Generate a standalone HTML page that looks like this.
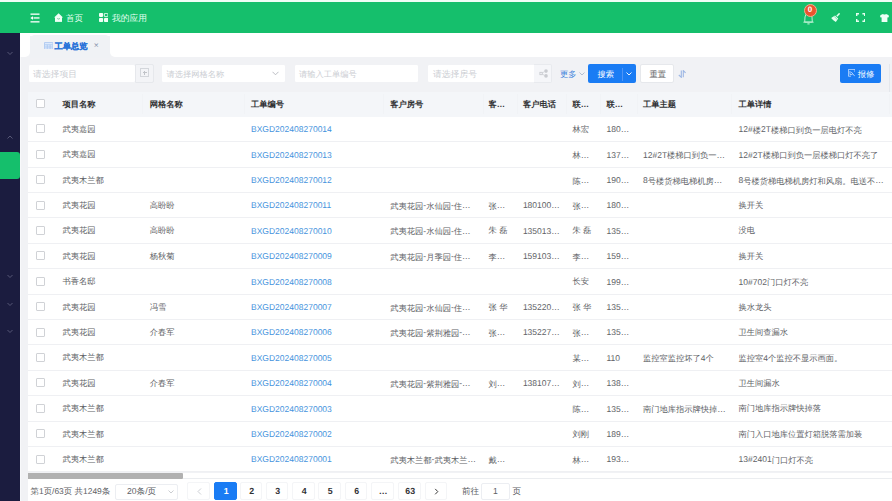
<!DOCTYPE html>
<html><head><meta charset="utf-8"><style>
*{margin:0;padding:0;box-sizing:border-box}
html,body{text-rendering:geometricPrecision;width:892px;height:501px;overflow:hidden;background:#fff;font-family:"Liberation Sans",sans-serif;position:relative}
.abs{position:absolute}
#topstrip{position:absolute;left:0;top:0;width:892px;height:2px;background:#effdf6}
#hdr{position:absolute;left:0;top:2px;width:892px;height:31px;background:#15bf6c;color:#fff}
#side{position:absolute;left:0;top:33px;width:20px;height:468px;background:#1b1c3f}
.chev{position:absolute;left:7px;width:6px;height:6px;border-right:1px solid #5d5f7e;border-bottom:1px solid #5d5f7e;transform:rotate(45deg)}
.chev.up{transform:rotate(-135deg)}
#sideact{position:absolute;left:0;top:151.5px;width:19.5px;height:27px;background:#15bf6c;border-radius:0 3px 3px 0}
#tabbar{position:absolute;left:20px;top:33px;width:872px;height:24px;background:#fff}
#tab{position:absolute;left:30px;top:35px;width:80px;height:23px;background:#f0f2f5;border-radius:5px 5px 0 0}
#content{position:absolute;left:20px;top:36px;width:872px;height:465px;background:#f1f2f5}
.inp{position:absolute;top:64px;height:19px;background:#fff;border:1px solid #f1f2f5;border-radius:2px;font-size:8.8px;color:#cbced3;line-height:17px;padding-top:1px;padding-left:4px;white-space:nowrap;overflow:hidden}
.app{position:absolute;top:64px;height:19px;background:#f5f7fa;border:1px solid #e8eaee;border-radius:0 2px 2px 0}
#table{position:absolute;left:28px;top:92px;width:864px;height:380px;background:#fff}
#thead{position:absolute;left:28px;top:92px;width:864px;height:24.8px;background:#f4f6f9}
.th{position:absolute;top:92.8px;height:24.5px;line-height:24.5px;font-size:8.25px;font-weight:bold;color:#303133;white-space:nowrap}
.thd{position:absolute;top:94px;width:1px;height:20px;background:#f1f3f6}
.td{position:absolute;height:25.4px;line-height:26.2px;font-size:8.25px;color:#606266;white-space:nowrap}
.td.link{color:#4593dd}
.lt{font-size:8.5px;letter-spacing:0;position:relative;top:-0.6px}

.rb{position:absolute;left:28px;width:864px;height:1px;background:#eff0f3}
.cb{position:absolute;width:9px;height:9.2px;border:1px solid #d0d2d6;border-radius:1px;background:#fff}
.pg{position:absolute;top:482px;width:22.5px;height:17.5px;line-height:17px;padding-top:0.2px;padding-left:2px;text-align:center;font-size:8.8px;font-weight:bold;color:#303133;background:#fff;border:1px solid #f4f5f7;border-radius:2px}
.pg.act{background:#1a7cf4;color:#fff;border-color:#1a7cf4}

</style></head><body>
<div id="topstrip"></div>
<div id="hdr">
  <svg class="abs" style="left:30px;top:10.5px" width="10" height="10" viewBox="0 0 10 10"><rect x="0.5" y="0.5" width="9" height="1.3" fill="#fff"/><rect x="3.5" y="4.3" width="6" height="1.3" fill="#fff"/><path d="M0.3 5 L3 3.2 L3 6.8 Z" fill="#fff"/><rect x="0.5" y="8.2" width="9" height="1.3" fill="#fff"/></svg>
  <svg class="abs" style="left:54px;top:11px" width="9.2" height="9" viewBox="0 0 9.2 9"><path d="M4.6 0.2 L9.1 4.6 L0.1 4.6 Z" fill="#effff6"/><rect x="1" y="4" width="7" height="4.9" fill="#effff6"/><path d="M3.3 5.5 Q4.6 6.6 5.9 5.5" stroke="#4aa878" stroke-width="0.7" fill="none"/></svg>
  <div class="abs" style="left:66px;top:9.7px;font-size:8.5px;line-height:12px;color:#e6fff2">首页</div>
  <svg class="abs" style="left:98.8px;top:11px" width="9.5" height="9" viewBox="0 0 9.5 9"><rect x="0" y="0" width="4.1" height="3.9" rx="0.8" fill="#f0fff6"/><rect x="5.35" y="0.35" width="3.6" height="3.3" rx="0.6" fill="none" stroke="#f0fff6" stroke-width="0.9"/><rect x="0" y="5" width="4.1" height="4" rx="0.8" fill="#f0fff6"/><rect x="5" y="5" width="4.3" height="4" rx="0.8" fill="#f0fff6"/></svg>
  <div class="abs" style="left:112px;top:9.7px;font-size:8.75px;line-height:12px;color:#e6fff2">我的应用</div>
  <!-- bell -->
  <svg class="abs" style="left:802px;top:8.5px" width="13" height="14" viewBox="0 0 13 14"><path d="M2.7 11 L3 6 Q3 2.5 6.5 2.5 Q10 2.5 10 6 L10.3 11 Z M1.4 11.2 L11.6 11.2" stroke="#c9f5dc" stroke-width="0.9" fill="none"/><path d="M5.4 12.9 L7.6 12.9" stroke="#c9f5dc" stroke-width="1"/></svg>
  <div class="abs" style="left:803.5px;top:2px;width:13px;height:13px;border-radius:50%;background:#e9542f;border:1.2px solid #f0b08f;color:#fff;font-size:8px;font-weight:bold;line-height:10.6px;text-align:center">0</div>
  <!-- broom -->
  <svg class="abs" style="left:830.8px;top:11px" width="9" height="9" viewBox="0 0 9 9"><path d="M8.6 0.4 L5.8 3.2" stroke="#e6fff1" stroke-width="1.5"/><path d="M4 2.4 L7.2 5.4 L4.8 8.9 Q2 7.6 0.2 5 Z" fill="#e6fff1"/><path d="M3.3 3.6 L6.1 6.3" stroke="#15bf6c" stroke-width="0.5"/></svg>
  <!-- fullscreen -->
  <svg class="abs" style="left:856px;top:11px" width="9.4" height="9" viewBox="0 0 9.4 9"><path d="M0.7 3 L0.7 0.7 L3 0.7 M6.4 0.7 L8.7 0.7 L8.7 3 M8.7 6 L8.7 8.3 L6.4 8.3 M3 8.3 L0.7 8.3 L0.7 6" stroke="#e6fff1" stroke-width="1.4" fill="none"/></svg>
  <!-- shirt -->
  <svg class="abs" style="left:880.4px;top:11.8px" width="9" height="8.2" viewBox="0 0 9 8.2"><path d="M3 0 Q4.5 1.1 6 0 L8.3 1 Q9 1.6 8.8 3.2 L7.4 3.5 L7.4 8.2 L1.6 8.2 L1.6 3.5 L0.2 3.2 Q0 1.6 0.7 1 Z" fill="#eefff6"/></svg>
</div>
<div id="side">
<svg class="abs" style="left:7px;top:17.9px" width="6" height="5" viewBox="0 0 6 5"><path d="M0.5 1 L3 3.5 L5.5 1" stroke="#5d5f7d" stroke-width="0.9" fill="none"/></svg><svg class="abs" style="left:7px;top:101.9px" width="6" height="5" viewBox="0 0 6 5"><path d="M0.5 3.5 L3 1 L5.5 3.5" stroke="#5d5f7d" stroke-width="0.9" fill="none"/></svg><div id="sideact" style="top:118.5px"></div><svg class="abs" style="left:7px;top:240.7px" width="6" height="5" viewBox="0 0 6 5"><path d="M0.5 1 L3 3.5 L5.5 1" stroke="#5d5f7d" stroke-width="0.9" fill="none"/></svg><svg class="abs" style="left:7px;top:268.5px" width="6" height="5" viewBox="0 0 6 5"><path d="M0.5 1 L3 3.5 L5.5 1" stroke="#5d5f7d" stroke-width="0.9" fill="none"/></svg><svg class="abs" style="left:7px;top:296.3px" width="6" height="5" viewBox="0 0 6 5"><path d="M0.5 1 L3 3.5 L5.5 1" stroke="#5d5f7d" stroke-width="0.9" fill="none"/></svg>
</div>
<div id="content"></div>
<div class="abs" style="left:20px;top:33px;width:872px;height:3px;background:#fff"></div>
<div class="abs" style="left:20px;top:33px;width:10px;height:24px;background:#fff;border-radius:0 0 5px 0"></div>
<div class="abs" style="left:110px;top:33px;width:782px;height:24px;background:#fff;border-radius:0 0 0 5px"></div>
<div class="abs" style="left:20px;top:57px;width:1.3px;height:444px;background:#f8f9fb"></div>
<div id="tab">
  <svg class="abs" style="left:13.5px;top:6.8px" width="9.4" height="7.7" viewBox="0 0 9.4 7.7"><rect x="0.4" y="0.4" width="8.6" height="6.9" rx="0.6" fill="#dce9fb" stroke="#a3c3f0" stroke-width="0.8"/><path d="M0.8 2.8 L8.6 2.8 M0.8 5 L8.6 5 M3.3 2.8 L3.3 7.3 M6.1 2.8 L6.1 7.3" stroke="#a3c3f0" stroke-width="0.7"/></svg>
  <div class="abs" style="left:24.5px;top:5.8px;font-size:8.25px;line-height:12px;font-weight:bold;color:#2a74d9;-webkit-text-stroke:0.2px #2a74d9">工单总览</div>
  <div class="abs" style="left:63.8px;top:4px;font-size:8.5px;line-height:12px;color:#7f8ea8">×</div>
</div>
<!-- filters -->
<div class="inp" style="left:28px;width:107px;border-right:none">请选择项目</div>
<div class="app" style="left:134.5px;width:19.5px;top:63.7px;height:19.8px;background:#f3f4f7;border-color:#e6e8ec"><div class="abs" style="left:4.8px;top:3.5px;width:8.7px;height:8.7px;border:1px solid #d3d6db;"></div><div class="abs" style="left:7.2px;top:7.4px;width:4px;height:0.9px;background:#c0c3c8"></div><div class="abs" style="left:8.75px;top:5.9px;width:0.9px;height:4px;background:#c0c3c8"></div></div>
<div class="inp" style="left:160.5px;width:125.5px;padding-left:5px;font-size:8.25px">请选择网格名称</div>
<svg class="abs" style="left:272px;top:71px" width="7" height="5" viewBox="0 0 7 5"><path d="M0.5 0.8 L3.5 3.8 L6.5 0.8" stroke="#b4b7bd" stroke-width="0.9" fill="none"/></svg>
<div class="inp" style="left:294px;width:125px;font-size:8.25px">请输入工单编号</div>
<div class="inp" style="left:427px;width:125px;padding-left:5px">请选择房号</div>
<div class="app" style="left:534px;width:18px;border-left:none;background:#f5f6f9"><svg class="abs" style="left:5.3px;top:4px" width="9" height="9" viewBox="0 0 9 9"><rect x="0.9" y="3.3" width="2.3" height="2.4" fill="none" stroke="#c4c6cb" stroke-width="0.8"/><circle cx="7" cy="2.1" r="1.8" fill="#c9cbd0"/><circle cx="7" cy="6.9" r="1.8" fill="#c9cbd0"/><path d="M3.2 4 L5.5 2.6 M3.2 5 L5.5 6.4" stroke="#c9cbd0" stroke-width="0.7"/></svg></div>
<div class="abs" style="left:560px;top:69px;font-size:8.25px;line-height:12px;color:#3d82dc">更多</div>
<svg class="abs" style="left:578.5px;top:72px" width="6" height="4" viewBox="0 0 6 4"><path d="M0.5 0.5 L3 3 L5.5 0.5" stroke="#9aa8c0" stroke-width="0.7" fill="none"/></svg>
<div class="abs" style="left:587.5px;top:64px;width:48.5px;height:19px;background:#1a7cf4;border-radius:2px"></div>
<div class="abs" style="left:622.4px;top:68px;width:0.8px;height:12.5px;background:#4f95f5"></div>
<div class="abs" style="left:597.5px;top:69px;font-size:8.25px;line-height:12px;color:#fff">搜索</div>
<svg class="abs" style="left:626px;top:72px" width="6" height="4" viewBox="0 0 6 4"><path d="M0.5 0.5 L3 3 L5.5 0.5" stroke="#fff" stroke-width="0.9" fill="none"/></svg>
<div class="abs" style="left:639.5px;top:64px;width:34.5px;height:19px;background:#fff;border:1px solid #e6e8ec;border-radius:2px"></div>
<div class="abs" style="left:649.5px;top:69px;font-size:8.25px;line-height:12px;color:#606266">重置</div>
<svg class="abs" style="left:677.5px;top:70.2px" width="8.5" height="7.8" viewBox="0 0 8.5 7.8"><path d="M3.3 0.4 L3.3 7.3 L0.8 5" stroke="#9db7e4" stroke-width="1.1" fill="none"/><path d="M5.3 7.3 L5.3 0.6 L7.6 2.9" stroke="#9db7e4" stroke-width="1.1" fill="none"/></svg>
<div class="abs" style="left:840.2px;top:63.9px;width:40.6px;height:19.5px;background:#1a7cf4;border-radius:2px"></div>
<svg class="abs" style="left:848px;top:69.2px" width="7.4" height="7.6" viewBox="0 0 7.4 7.6"><path d="M7 3 L7 0.4 L0.4 0.4 L0.4 7.2 L3 7.2" fill="none" stroke="#cfe3ff" stroke-width="0.8"/><path d="M2 2 L2 5.6 L4.5 5.6 M3.2 3 L6.8 7.2" stroke="#cfe3ff" stroke-width="0.8" fill="none"/></svg>
<div class="abs" style="left:857.7px;top:69px;font-size:8.25px;line-height:12px;color:#fff">报修</div>
<div class="abs" style="left:889.3px;top:64px;width:1px;height:408px;background:#e4e7ec"></div>
<!-- table -->
<div id="table"></div>
<div id="thead"></div>
<div class="th" style="left:62.5px">项目名称</div><div class="th" style="left:149.7px">网格名称</div><div class="th" style="left:251px">工单编号</div><div class="th" style="left:390.3px">客户房号</div><div class="th" style="left:488.6px">客…</div><div class="th" style="left:522.9px">客户电话</div><div class="th" style="left:572.5px">联…</div><div class="th" style="left:606.5px">联…</div><div class="th" style="left:643px">工单主题</div><div class="th" style="left:738.6px">工单详情</div><div class="thd" style="left:141.5px"></div><div class="thd" style="left:243.5px"></div><div class="thd" style="left:382.5px"></div><div class="thd" style="left:482.5px"></div><div class="thd" style="left:516.8px"></div><div class="thd" style="left:566px"></div><div class="thd" style="left:600px"></div><div class="thd" style="left:636.5px"></div><div class="thd" style="left:730.6px"></div><div class="thd" style="left:888.5px"></div><div class="cb" style="left:36px;top:98.5px"></div>
<div class="cb" style="left:36px;top:124.3px"></div><div class="td" style="left:62.5px;top:116.8px">武夷嘉园</div><div class="td link" style="left:251px;top:116.8px"><span class="lt">BXGD202408270014</span></div><div class="td" style="left:572.5px;top:116.8px">林宏</div><div class="td" style="left:606.5px;top:116.8px"><span class="lt">180…</span></div><div class="td" style="left:738.6px;top:116.8px"><span class="lt">12#</span>楼<span class="lt">2T</span>楼梯口到负一层电灯不亮</div><div class="rb" style="top:141.2px"></div>
<div class="cb" style="left:36px;top:149.7px"></div><div class="td" style="left:62.5px;top:142.2px">武夷嘉园</div><div class="td link" style="left:251px;top:142.2px"><span class="lt">BXGD202408270013</span></div><div class="td" style="left:572.5px;top:142.2px">林<span class="lt">…</span></div><div class="td" style="left:606.5px;top:142.2px"><span class="lt">137…</span></div><div class="td" style="left:643px;top:142.2px"><span class="lt">12#2T</span>楼梯口到负一<span class="lt">…</span></div><div class="td" style="left:738.6px;top:142.2px"><span class="lt">12#2T</span>楼梯口到负一层楼梯口灯不亮了</div><div class="rb" style="top:166.6px"></div>
<div class="cb" style="left:36px;top:175.1px"></div><div class="td" style="left:62.5px;top:167.6px">武夷木兰都</div><div class="td link" style="left:251px;top:167.6px"><span class="lt">BXGD202408270012</span></div><div class="td" style="left:572.5px;top:167.6px">陈<span class="lt">…</span></div><div class="td" style="left:606.5px;top:167.6px"><span class="lt">190…</span></div><div class="td" style="left:643px;top:167.6px"><span class="lt">8</span>号楼货梯电梯机房<span class="lt">…</span></div><div class="td" style="left:738.6px;top:167.6px"><span class="lt">8</span>号楼货梯电梯机房灯和风扇。电送不<span class="lt">…</span></div><div class="rb" style="top:192.0px"></div>
<div class="cb" style="left:36px;top:200.5px"></div><div class="td" style="left:62.5px;top:193.0px">武夷花园</div><div class="td" style="left:149.7px;top:193.0px">高盼盼</div><div class="td link" style="left:251px;top:193.0px"><span class="lt">BXGD202408270011</span></div><div class="td" style="left:390.3px;top:193.0px">武夷花园<span class="lt">-</span>水仙园<span class="lt">-</span>住<span class="lt">…</span></div><div class="td" style="left:488.6px;top:193.0px">张<span class="lt">…</span></div><div class="td" style="left:522.9px;top:193.0px"><span class="lt">180100…</span></div><div class="td" style="left:572.5px;top:193.0px">张<span class="lt">…</span></div><div class="td" style="left:606.5px;top:193.0px"><span class="lt">180…</span></div><div class="td" style="left:738.6px;top:193.0px">换开关</div><div class="rb" style="top:217.4px"></div>
<div class="cb" style="left:36px;top:225.9px"></div><div class="td" style="left:62.5px;top:218.4px">武夷花园</div><div class="td" style="left:149.7px;top:218.4px">高盼盼</div><div class="td link" style="left:251px;top:218.4px"><span class="lt">BXGD202408270010</span></div><div class="td" style="left:390.3px;top:218.4px">武夷花园<span class="lt">-</span>水仙园<span class="lt">-</span>住<span class="lt">…</span></div><div class="td" style="left:488.6px;top:218.4px">朱 磊</div><div class="td" style="left:522.9px;top:218.4px"><span class="lt">135013…</span></div><div class="td" style="left:572.5px;top:218.4px">朱 磊</div><div class="td" style="left:606.5px;top:218.4px"><span class="lt">135…</span></div><div class="td" style="left:738.6px;top:218.4px">没电</div><div class="rb" style="top:242.8px"></div>
<div class="cb" style="left:36px;top:251.3px"></div><div class="td" style="left:62.5px;top:243.8px">武夷花园</div><div class="td" style="left:149.7px;top:243.8px">杨秋菊</div><div class="td link" style="left:251px;top:243.8px"><span class="lt">BXGD202408270009</span></div><div class="td" style="left:390.3px;top:243.8px">武夷花园<span class="lt">-</span>月季园<span class="lt">-</span>住<span class="lt">…</span></div><div class="td" style="left:488.6px;top:243.8px">李<span class="lt">…</span></div><div class="td" style="left:522.9px;top:243.8px"><span class="lt">159103…</span></div><div class="td" style="left:572.5px;top:243.8px">李<span class="lt">…</span></div><div class="td" style="left:606.5px;top:243.8px"><span class="lt">159…</span></div><div class="td" style="left:738.6px;top:243.8px">换开关</div><div class="rb" style="top:268.2px"></div>
<div class="cb" style="left:36px;top:276.7px"></div><div class="td" style="left:62.5px;top:269.2px">书香名邸</div><div class="td link" style="left:251px;top:269.2px"><span class="lt">BXGD202408270008</span></div><div class="td" style="left:572.5px;top:269.2px">长安</div><div class="td" style="left:606.5px;top:269.2px"><span class="lt">199…</span></div><div class="td" style="left:738.6px;top:269.2px"><span class="lt">10#702</span>门口灯不亮</div><div class="rb" style="top:293.6px"></div>
<div class="cb" style="left:36px;top:302.1px"></div><div class="td" style="left:62.5px;top:294.6px">武夷花园</div><div class="td" style="left:149.7px;top:294.6px">冯雪</div><div class="td link" style="left:251px;top:294.6px"><span class="lt">BXGD202408270007</span></div><div class="td" style="left:390.3px;top:294.6px">武夷花园<span class="lt">-</span>水仙园<span class="lt">-</span>住<span class="lt">…</span></div><div class="td" style="left:488.6px;top:294.6px">张 华</div><div class="td" style="left:522.9px;top:294.6px"><span class="lt">135220…</span></div><div class="td" style="left:572.5px;top:294.6px">张 华</div><div class="td" style="left:606.5px;top:294.6px"><span class="lt">135…</span></div><div class="td" style="left:738.6px;top:294.6px">换水龙头</div><div class="rb" style="top:319.0px"></div>
<div class="cb" style="left:36px;top:327.5px"></div><div class="td" style="left:62.5px;top:320.0px">武夷花园</div><div class="td" style="left:149.7px;top:320.0px">介春军</div><div class="td link" style="left:251px;top:320.0px"><span class="lt">BXGD202408270006</span></div><div class="td" style="left:390.3px;top:320.0px">武夷花园<span class="lt">-</span>紫荆雅园<span class="lt">-…</span></div><div class="td" style="left:488.6px;top:320.0px">张<span class="lt">…</span></div><div class="td" style="left:522.9px;top:320.0px"><span class="lt">135227…</span></div><div class="td" style="left:572.5px;top:320.0px">张<span class="lt">…</span></div><div class="td" style="left:606.5px;top:320.0px"><span class="lt">135…</span></div><div class="td" style="left:738.6px;top:320.0px">卫生间查漏水</div><div class="rb" style="top:344.4px"></div>
<div class="cb" style="left:36px;top:352.9px"></div><div class="td" style="left:62.5px;top:345.4px">武夷木兰都</div><div class="td link" style="left:251px;top:345.4px"><span class="lt">BXGD202408270005</span></div><div class="td" style="left:572.5px;top:345.4px">某<span class="lt">…</span></div><div class="td" style="left:606.5px;top:345.4px"><span class="lt">110</span></div><div class="td" style="left:643px;top:345.4px">监控室监控坏了<span class="lt">4</span>个</div><div class="td" style="left:738.6px;top:345.4px">监控室<span class="lt">4</span>个监控不显示画面。</div><div class="rb" style="top:369.8px"></div>
<div class="cb" style="left:36px;top:378.3px"></div><div class="td" style="left:62.5px;top:370.8px">武夷花园</div><div class="td" style="left:149.7px;top:370.8px">介春军</div><div class="td link" style="left:251px;top:370.8px"><span class="lt">BXGD202408270004</span></div><div class="td" style="left:390.3px;top:370.8px">武夷花园<span class="lt">-</span>紫荆雅园<span class="lt">-…</span></div><div class="td" style="left:488.6px;top:370.8px">刘<span class="lt">…</span></div><div class="td" style="left:522.9px;top:370.8px"><span class="lt">138107…</span></div><div class="td" style="left:572.5px;top:370.8px">刘<span class="lt">…</span></div><div class="td" style="left:606.5px;top:370.8px"><span class="lt">138…</span></div><div class="td" style="left:738.6px;top:370.8px">卫生间漏水</div><div class="rb" style="top:395.2px"></div>
<div class="cb" style="left:36px;top:403.7px"></div><div class="td" style="left:62.5px;top:396.2px">武夷木兰都</div><div class="td link" style="left:251px;top:396.2px"><span class="lt">BXGD202408270003</span></div><div class="td" style="left:572.5px;top:396.2px">陈<span class="lt">…</span></div><div class="td" style="left:606.5px;top:396.2px"><span class="lt">135…</span></div><div class="td" style="left:643px;top:396.2px">南门地库指示牌快掉<span class="lt">…</span></div><div class="td" style="left:738.6px;top:396.2px">南门地库指示牌快掉落</div><div class="rb" style="top:420.6px"></div>
<div class="cb" style="left:36px;top:429.1px"></div><div class="td" style="left:62.5px;top:421.6px">武夷木兰都</div><div class="td link" style="left:251px;top:421.6px"><span class="lt">BXGD202408270002</span></div><div class="td" style="left:572.5px;top:421.6px">刘刚</div><div class="td" style="left:606.5px;top:421.6px"><span class="lt">189…</span></div><div class="td" style="left:738.6px;top:421.6px">南门入口地库位置灯箱脱落需加装</div><div class="rb" style="top:446.0px"></div>
<div class="cb" style="left:36px;top:454.5px"></div><div class="td" style="left:62.5px;top:447.0px">武夷木兰都</div><div class="td link" style="left:251px;top:447.0px"><span class="lt">BXGD202408270001</span></div><div class="td" style="left:390.3px;top:447.0px">武夷木兰都<span class="lt">-</span>武夷木兰<span class="lt">…</span></div><div class="td" style="left:488.6px;top:447.0px">戴<span class="lt">…</span></div><div class="td" style="left:572.5px;top:447.0px">林<span class="lt">…</span></div><div class="td" style="left:606.5px;top:447.0px"><span class="lt">193…</span></div><div class="td" style="left:738.6px;top:447.0px"><span class="lt">13#2401</span>门口灯不亮</div><div class="rb" style="top:471.4px"></div>
<!-- scrollbar -->
<div class="abs" style="left:28px;top:472.5px;width:864px;height:6.5px;background:#fff"></div>
<div class="abs" style="left:28px;top:473px;width:155px;height:5.6px;background:#b1b1b1;border-radius:0 1px 1px 0"></div>
<div class="abs" style="left:28px;top:479px;width:864px;height:22px;background:#fff"></div><div class="abs" style="left:183px;top:477.8px;width:709px;height:0.8px;background:#ebedf0"></div>
<!-- pagination -->
<div class="abs" style="left:30.5px;top:484.5px;font-size:8.45px;line-height:12px;color:#606266">第1页/63页 共1249条</div>
<div class="abs" style="left:115px;top:484px;width:62.5px;height:15.5px;border:1px solid #eceef2;border-radius:2px;background:#fff"></div>
<div class="abs" style="left:127px;top:485px;font-size:8.6px;line-height:13px;color:#606266">20条/页</div>
<svg class="abs" style="left:167.5px;top:490px" width="6" height="4" viewBox="0 0 6 4"><path d="M0.5 0.5 L3 3 L5.5 0.5" stroke="#b4b7bd" stroke-width="0.7" fill="none"/></svg>
<div class="pg" style="left:187px"><svg class="abs" style="left:8.5px;top:4.5px" width="5" height="7" viewBox="0 0 5 7"><path d="M4 0.5 L1 3.5 L4 6.5" stroke="#c6c9cf" stroke-width="0.9" fill="none"/></svg></div>
<div class="pg act" style="left:214px">1</div>
<div class="pg" style="left:239.5px">2</div>
<div class="pg" style="left:265.5px">3</div>
<div class="pg" style="left:292px">4</div>
<div class="pg" style="left:318px">5</div>
<div class="pg" style="left:344.5px">6</div>
<div class="pg" style="left:371px">…</div>
<div class="pg" style="left:398px">63</div>
<div class="pg" style="left:424.5px"><svg class="abs" style="left:8.5px;top:4.5px" width="5" height="7" viewBox="0 0 5 7"><path d="M1.2 0.9 L3.8 3.6 L1.2 6.3" stroke="#3a3a3a" stroke-width="1" fill="none"/></svg></div>
<div class="abs" style="left:462px;top:484.5px;font-size:8.6px;line-height:12px;color:#606266">前往</div>
<div class="abs" style="left:481px;top:482.5px;width:29px;height:17px;border:1px solid #eceef2;border-radius:2px;background:#fff;font-size:8.6px;line-height:15px;text-align:center;color:#606266">1</div>
<div class="abs" style="left:512.5px;top:484.5px;font-size:8.6px;line-height:12px;color:#606266">页</div>

</body></html>
